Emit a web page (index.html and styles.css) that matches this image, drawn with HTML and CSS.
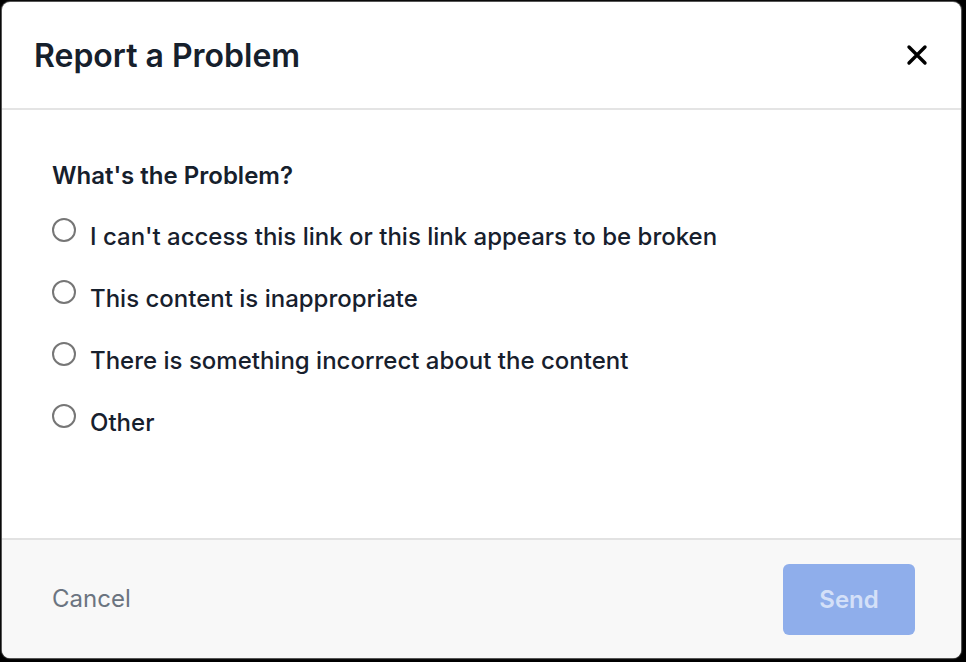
FILE: index.html
```html
<!DOCTYPE html>
<html lang="en">
<head>
    <meta charset="UTF-8">
    <meta name="viewport" content="width=device-width, initial-scale=1.0">
    <title>Report a Problem</title>
    <link rel="stylesheet" href="styles.css">
</head>
<body>

    <div class="modal">
        <div class="modal-header">
            <h1>Report a Problem</h1>
            <button type="button" class="close-btn" aria-label="Close">
                <svg width="22" height="22" viewBox="0 0 22 22">
                    <path d="M3 3 L19 19 M19 3 L3 19" stroke="#000" stroke-width="3.4" stroke-linecap="round"/>
                </svg>
            </button>
        </div>

        <form class="modal-body" id="report-form">
            <h2>What's the Problem?</h2>
            <label class="option">
                <input type="radio" name="problem" value="broken">
                <span>I can't access this link or this link appears to be broken</span>
            </label>
            <label class="option">
                <input type="radio" name="problem" value="inappropriate">
                <span>This content is inappropriate</span>
            </label>
            <label class="option">
                <input type="radio" name="problem" value="incorrect">
                <span>There is something incorrect about the content</span>
            </label>
            <label class="option">
                <input type="radio" name="problem" value="other">
                <span>Other</span>
            </label>
        </form>

        <div class="modal-footer">
            <button type="button" class="cancel-btn">Cancel</button>
            <button type="submit" class="send-btn" form="report-form" disabled>Send</button>
        </div>
    </div>

</body>
</html>
```

FILE: styles.css
```css
html, body {
    height: 100%;
}

body {
    margin: 0;
    padding: 2px 5px 4px 2px;
    box-sizing: border-box;
    background-color: #000;
    font-family: Inter, "Noto Sans", sans-serif;
    color: #17202d;
}

.modal {
    height: 100%;
    background-color: #fff;
    border-radius: 8px;
    overflow: hidden;
    display: flex;
    flex-direction: column;
    box-shadow: 0 0 1px 1px rgba(160, 160, 160, 0.6);
}

.modal-header {
    display: flex;
    justify-content: space-between;
    align-items: center;
    padding: 34px 32px 32px 32px;
    border-bottom: 2px solid #e4e4e4;
}

h1 {
    margin: 0;
    font-size: 32px;
    line-height: 40px;
    font-weight: 600;
    color: #16202c;
}

.close-btn {
    background: none;
    border: none;
    padding: 0;
    margin: -3px 1px 0 0;
    cursor: pointer;
    display: flex;
}

.modal-body {
    flex: 1;
    padding: 51px 50px 0 50px;
}

h2 {
    margin: 0 0 30.5px 0;
    font-size: 24px;
    line-height: 30px;
    font-weight: 600;
    color: #16202c;
}

.option {
    display: flex;
    align-items: flex-start;
    gap: 14px;
    margin-bottom: 32px;
    font-size: 24px;
    line-height: 30px;
    font-weight: 500;
    cursor: pointer;
}

.option input {
    appearance: none;
    width: 24px;
    height: 24px;
    margin: -4px 0 0 0;
    border: 2px solid #767676;
    border-radius: 50%;
    background: #fff;
    flex-shrink: 0;
    cursor: pointer;
}

.option input:checked {
    border: 7px solid #2f6fe0;
}

.modal-footer {
    display: flex;
    justify-content: space-between;
    align-items: center;
    height: 120px;
    box-sizing: border-box;
    padding: 0 46px 0 50px;
    background-color: #f8f8f8;
    border-top: 2px solid #e2e2e2;
}

.cancel-btn {
    background: none;
    border: none;
    padding: 0;
    margin-top: -2px;
    font-family: inherit;
    font-size: 24px;
    color: #6b7480;
    cursor: pointer;
}

.send-btn {
    width: 132px;
    height: 71px;
    border: none;
    border-radius: 6px;
    background-color: #8faeeb;
    color: #d4e0f8;
    font-family: inherit;
    font-size: 24px;
    font-weight: 600;
}
```
